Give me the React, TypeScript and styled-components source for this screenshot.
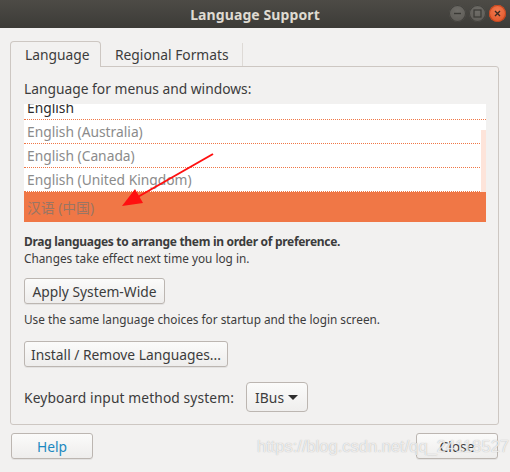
import React from "react";
import styled, { createGlobalStyle, css } from "styled-components";

const GlobalStyle = createGlobalStyle`
  html, body {
    margin: 0;
    padding: 0;
    background: #f2f1f0;
  }
  body {
    font-family: "Noto Sans", "Noto Sans CJK SC", sans-serif;
    color: #3c3c3c;
  }
`;

const Window = styled.div`
  position: relative;
  width: 510px;
  height: 472px;
  overflow: hidden;
  background: #f2f1f0;
  display: flex;
  flex-direction: column;
`;

const TitleBar = styled.div`
  height: 28px;
  flex: none;
  display: flex;
  align-items: center;
  justify-content: center;
  position: relative;
  background: linear-gradient(#4d4b46, #3c3b37);
`;

const Title = styled.div`
  font-size: 14px;
  font-weight: bold;
  color: #dfdbd2;
  letter-spacing: 0.1px;
`;

const WinControls = styled.div`
  position: absolute;
  right: 4px;
  top: 5px;
  display: flex;
  gap: 3px;
`;

const WinButton = styled.div<{ $close?: boolean }>`
  width: 17px;
  height: 17px;
  border-radius: 50%;
  display: flex;
  align-items: center;
  justify-content: center;
  ${(p) =>
    p.$close
      ? css`
          background: radial-gradient(circle at 50% 35%, #f27a4f, #df4f22);
          box-shadow: inset 0 0 0 1px #c2461f;
        `
      : css`
          background: radial-gradient(circle at 50% 35%, #6f6d68, #595752);
          box-shadow: inset 0 0 0 1px #42413d;
        `}
`;

const Body = styled.div`
  padding: 13px 11px 0 10px;
  display: flex;
  flex-direction: column;
`;

const TabStrip = styled.div`
  display: flex;
  align-items: flex-end;
  height: 25px;
`;

const Tab = styled.div<{ $active?: boolean }>`
  position: relative;
  z-index: 1;
  display: flex;
  align-items: center;
  font-size: 13.8px;
  box-sizing: border-box;
  ${(p) =>
    p.$active
      ? css`
          width: 91px;
          padding-left: 14px;
          border: 1px solid #cdc7c2;
          border-bottom: none;
          border-radius: 4px 4px 0 0;
          background: #f2f1f0;
          height: 26px;
          margin-bottom: -1px;
        `
      : css`
          padding: 0 13px 0 14px;
          border-right: 1px solid #dedad6;
          height: 23px;
          margin-bottom: 0;
        `}
`;

const Notebook = styled.div`
  border: 1px solid #cdc7c2;
  border-radius: 0 3px 3px 3px;
  padding: 13px 12px 12px 13px;
  display: flex;
  flex-direction: column;
  align-items: flex-start;
`;

const SectionLabel = styled.div`
  font-size: 13.8px;
  line-height: 18px;
`;

const LangList = styled.div`
  position: relative;
  align-self: stretch;
  margin-top: 6px;
  height: 118px;
  overflow: hidden;
  background: #fff;
`;

const LangRows = styled.div`
  margin-top: -8px;
`;

const LangRow = styled.div<{ $selected?: boolean; $primary?: boolean }>`
  height: 24px;
  box-sizing: border-box;
  padding-left: 3px;
  display: flex;
  align-items: center;
  font-size: 13.8px;
  color: ${(p) => (p.$primary ? "#2c2c2c" : "#8b8b8b")};
  border-bottom: 1px dotted #f07746;
  ${(p) =>
    p.$selected &&
    css`
      height: 30px;
      border-bottom: none;
      background: #f07746;
      color: #9a7564;
    `}
`;

const ScrollHint = styled.div`
  position: absolute;
  right: 0;
  top: 26px;
  width: 5px;
  height: 62px;
  background: #fde4da;
`;

const Hint = styled.div<{ $bold?: boolean; $gap?: number }>`
  font-size: ${(p) => (p.$bold ? "12px" : "11.8px")};
  line-height: 16px;
  font-weight: ${(p) => (p.$bold ? "bold" : "normal")};
  letter-spacing: ${(p) => (p.$bold ? "-0.3px" : "0")};
  margin-top: ${(p) => p.$gap ?? 0}px;
`;

const PushButton = styled.button<{ $gap?: number; $width?: number }>`
  height: 26px;
  margin-top: ${(p) => p.$gap ?? 0}px;
  width: ${(p) => p.$width ?? 82}px;
  padding: 0;
  border: 1px solid #bcb6b1;
  border-radius: 3px;
  background: linear-gradient(#fbfbfa, #eeedec);
  box-shadow: 0 1px 0 rgba(0, 0, 0, 0.06);
  font-family: inherit;
  font-size: 13.8px;
  color: #3c3c3c;
`;

const KeyboardRow = styled.div`
  margin-top: 15px;
  display: flex;
  align-items: center;
  gap: 12px;
  font-size: 13.8px;
  letter-spacing: 0.1px;
`;

const ComboBox = styled.div`
  width: 62px;
  height: 30px;
  box-sizing: border-box;
  border: 1px solid #bcb6b1;
  border-radius: 4px;
  background: linear-gradient(#fbfbfa, #efeeed);
  display: flex;
  align-items: center;
  justify-content: space-between;
  padding: 0 9px 0 8px;
`;

const Caret = styled.span`
  width: 0;
  height: 0;
  border-left: 5px solid transparent;
  border-right: 5px solid transparent;
  border-top: 5px solid #2e2e2e;
`;

const Footer = styled.div`
  margin-top: 8px;
  display: flex;
  justify-content: space-between;
  padding: 0 1px 0 1px;
`;

const HelpLabel = styled.span`
  color: #1b88c0;
`;

const WaterMark = styled.div`
  position: absolute;
  left: 257px;
  top: 437px;
  font-family: "Liberation Sans", Arial, sans-serif;
  font-size: 16.5px;
  color: rgba(255, 255, 255, 0.75);
  text-shadow: 0 0 1px rgba(120, 120, 120, 0.6);
  pointer-events: none;
  white-space: nowrap;
`;

const Annotation = styled.svg`
  position: absolute;
  left: 0;
  top: 0;
  pointer-events: none;
`;

const languages = [
  "English",
  "English (Australia)",
  "English (Canada)",
  "English (United Kingdom)",
];

export default function App() {
  return (
    <>
      <GlobalStyle />
      <Window>
        <TitleBar>
          <Title>Language Support</Title>
          <WinControls>
            <WinButton>
              <svg width="9" height="9" viewBox="0 0 9 9">
                <path d="M1 4.5h7" stroke="#3a3935" strokeWidth="1.4" />
              </svg>
            </WinButton>
            <WinButton>
              <svg width="9" height="9" viewBox="0 0 9 9">
                <rect x="1" y="1" width="7" height="7" fill="none" stroke="#3a3935" strokeWidth="1.2" />
              </svg>
            </WinButton>
            <WinButton $close>
              <svg width="9" height="9" viewBox="0 0 9 9">
                <path d="M2 2l5 5M7 2l-5 5" stroke="#3c2a22" strokeWidth="1.4" />
              </svg>
            </WinButton>
          </WinControls>
        </TitleBar>

        <Body>
          <TabStrip>
            <Tab $active>Language</Tab>
            <Tab>Regional Formats</Tab>
          </TabStrip>
          <Notebook>
            <SectionLabel>Language for menus and windows:</SectionLabel>
            <LangList>
              <LangRows>
                {languages.map((lang, i) => (
                  <LangRow key={lang} $primary={i === 0}>
                    {lang}
                  </LangRow>
                ))}
                <LangRow $selected>汉语 (中国)</LangRow>
              </LangRows>
              <ScrollHint />
            </LangList>
            <Hint $bold $gap={12}>
              Drag languages to arrange them in order of preference.
            </Hint>
            <Hint>Changes take effect next time you log in.</Hint>
            <PushButton $gap={12} $width={141}>
              Apply System-Wide
            </PushButton>
            <Hint $gap={7}>
              Use the same language choices for startup and the login screen.
            </Hint>
            <PushButton $gap={14} $width={204}>
              Install / Remove Languages...
            </PushButton>
            <KeyboardRow>
              Keyboard input method system:
              <ComboBox>
                IBus
                <Caret />
              </ComboBox>
            </KeyboardRow>
          </Notebook>
          <Footer>
            <PushButton>
              <HelpLabel>Help</HelpLabel>
            </PushButton>
            <PushButton>Close</PushButton>
          </Footer>
        </Body>

        <WaterMark>https://blog.csdn.net/qq_24118527</WaterMark>

        <Annotation width="510" height="472" viewBox="0 0 510 472">
          <line x1="213" y1="154" x2="136" y2="198" stroke="#ff1010" strokeWidth="2" />
          <polygon points="122,206 135,189 143,203" fill="#ff1010" />
        </Annotation>
      </Window>
    </>
  );
}
